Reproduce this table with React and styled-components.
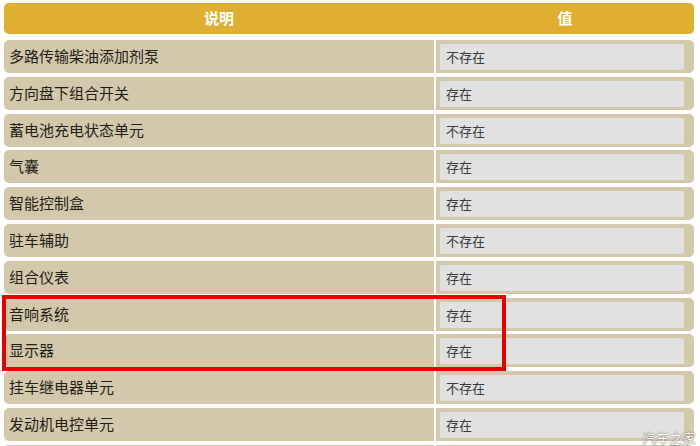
import styled, { createGlobalStyle } from 'styled-components'

const GlobalStyle = createGlobalStyle`
  html, body {
    margin: 0;
    padding: 0;
    background: #ffffff;
    overflow: hidden;
  }
  body {
    font-family: "Noto Sans CJK SC", "Noto Sans", sans-serif;
  }
`;

const Page = styled.div`
  position: relative;
  width: 700px;
  height: 446px;
  overflow: hidden;
  padding: 3px 6px 0 4px;
  box-sizing: border-box;
`;

const Header = styled.div`
  display: grid;
  grid-template-columns: 430px 1fr;
  column-gap: 2px;
  height: 31px;
  background: #dfb030;
  border-radius: 5px;
  margin-bottom: 6px;
`;

const HeadCell = styled.div`
  display: flex;
  align-items: center;
  justify-content: center;
  padding-bottom: 2px;
  color: #ffffff;
  font-size: 15px;
  font-weight: 700;
`;

const Rows = styled.div`
  display: flex;
  flex-direction: column;
  gap: 3.8px;
`;

const Row = styled.div`
  display: grid;
  grid-template-columns: 430px 1fr;
  column-gap: 2px;
  height: 33px;
`;

const Label = styled.div`
  display: flex;
  align-items: center;
  padding: 0 0 2px 5px;
  background: #d3c8aa;
  border-radius: 5px 0 0 5px;
  color: #1f1d15;
  font-size: 15px;
`;

const ValueCell = styled.div`
  display: flex;
  padding: 4px 10px 3px 4px;
  background: #d3c8aa;
  border-radius: 0 5px 5px 0;
`;

const ValueBox = styled.div`
  flex: 1;
  display: flex;
  align-items: center;
  padding: 0 0 1px 6px;
  background: #e1e1e1;
  border-radius: 2px;
  color: #3a3a3a;
  font-size: 13px;
`;

const Highlight = styled.div`
  position: absolute;
  left: 2px;
  top: 295px;
  width: 504px;
  height: 76px;
  border: 4px solid #e60000;
  box-sizing: border-box;
  pointer-events: none;
`;

const Watermark = styled.div`
  position: absolute;
  right: 4px;
  top: 428px;
  color: #ffffff;
  font-size: 13px;
  letter-spacing: 0.3px;
  text-shadow: 0 0 1px rgba(70, 60, 40, 0.9), 0 0 2px rgba(70, 60, 40, 0.5);
`;

const items = [
  ['多路传输柴油添加剂泵', '不存在'],
  ['方向盘下组合开关', '存在'],
  ['蓄电池充电状态单元', '不存在'],
  ['气囊', '存在'],
  ['智能控制盒', '存在'],
  ['驻车辅助', '不存在'],
  ['组合仪表', '存在'],
  ['音响系统', '存在'],
  ['显示器', '存在'],
  ['挂车继电器单元', '不存在'],
  ['发动机电控单元', '存在'],
  ['', ''],
];

const App = () => {
  return (
    <Page>
      <GlobalStyle />
      <Header>
        <HeadCell>说明</HeadCell>
        <HeadCell>值</HeadCell>
      </Header>
      <Rows>
        {items.map(([name, value], i) => (
          <Row key={i}>
            <Label>{name}</Label>
            <ValueCell>
              <ValueBox>{value}</ValueBox>
            </ValueCell>
          </Row>
        ))}
      </Rows>
      <Highlight />
      <Watermark>汽车之家</Watermark>
    </Page>
  )
}

export default App
